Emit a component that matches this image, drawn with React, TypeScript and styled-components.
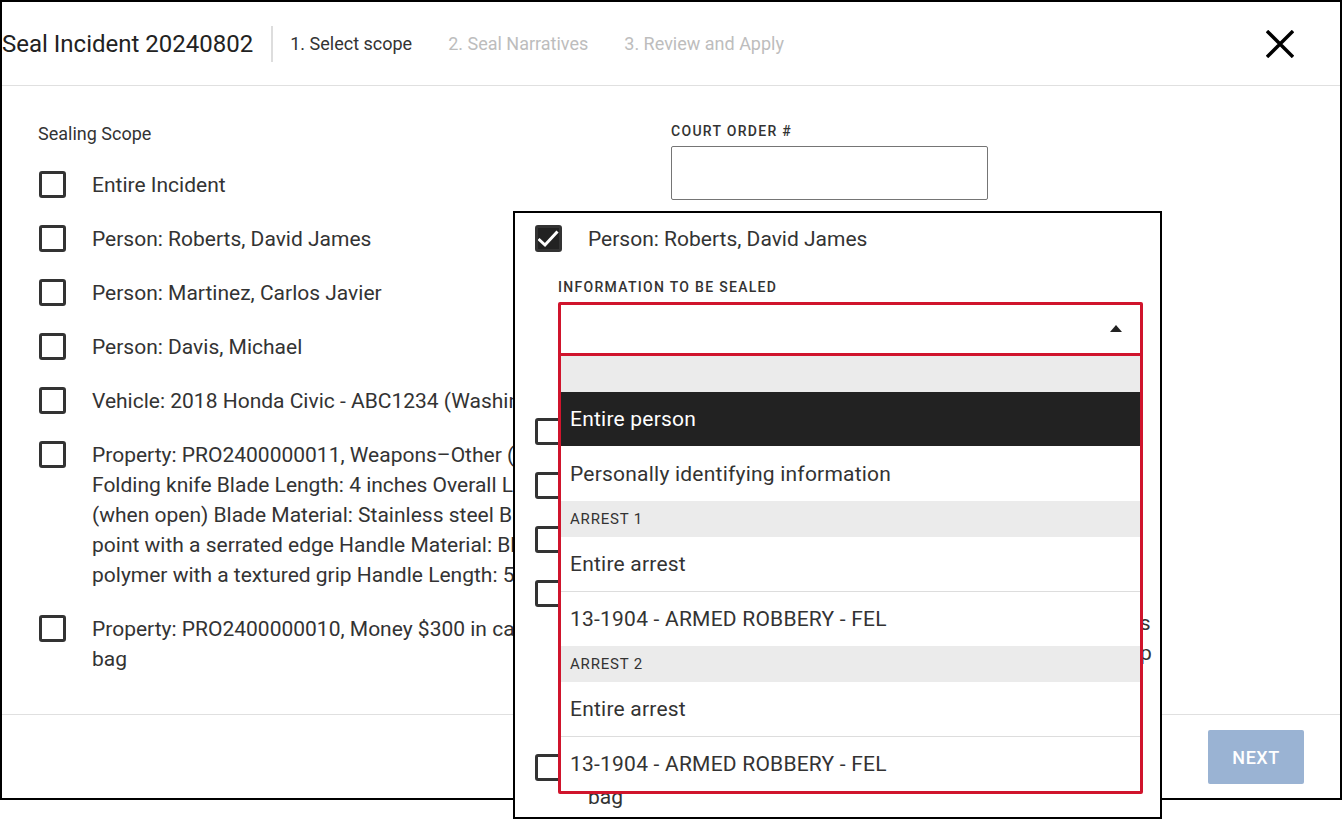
import React from "react";
import styled, { createGlobalStyle } from "styled-components";

const Global = createGlobalStyle`
  html, body { margin: 0; padding: 0; background: #fff; overflow: hidden; }
  * { box-sizing: border-box; }
  body { font-family: Roboto, "Liberation Sans", sans-serif; color: #2b2b2b; }
`;

const Page = styled.div`
  position: relative;
  width: 1342px;
  height: 819px;
  overflow: hidden;
`;
const Dialog = styled.div`
  width: 1342px;
  height: 800px;
  border: 2px solid #000;
  display: flex;
  flex-direction: column;
`;
const Header = styled.header`
  height: 84px;
  flex: none;
  border-bottom: 1px solid #e0e0e0;
  display: flex;
  align-items: center;
`;
const Title = styled.h1`
  margin: 0;
  font-size: 24px;
  font-weight: 400;
  color: #222;
  padding-right: 18px;
  height: 36px;
  line-height: 36px;
  border-right: 2px solid #ddd;
`;
const Steps = styled.nav`
  display: flex;
  gap: 36px;
  margin-left: 17px;
  flex: 1;
`;
const Step = styled.span<{ $active?: boolean }>`
  font-size: 18px;
  color: ${(p) => (p.$active ? "#333" : "#bdbdbd")};
`;
const CloseButton = styled.button`
  border: 0;
  background: none;
  padding: 0;
  margin-right: 46px;
  width: 28px;
  height: 28px;
  display: block;
  svg { display: block; }
`;
const Body = styled.main`
  flex: 1;
  display: grid;
  grid-template-columns: 633px 1fr;
  padding: 36px 0 0 36px;
  min-height: 0;
  border-bottom: 1px solid #e0e0e0;
`;
const ScopeTitle = styled.div`
  font-size: 18px;
  line-height: 24px;
  color: #333;
  margin-bottom: 24px;
`;
const RowList = styled.div`
  display: flex;
  flex-direction: column;
`;
const Row = styled.label`
  display: flex;
  align-items: flex-start;
  gap: 26px;
  padding: 0 0 24px 1px;
  font-size: 21px;
  line-height: 30px;
  color: #333;
`;
const Box = styled.span<{ $checked?: boolean }>`
  flex: none;
  width: 27px;
  height: 27px;
  margin-top: 1px;
  border: 3px solid #333;
  border-radius: 3px;
  background: ${(p) => (p.$checked ? "#222" : "#fff")};
  display: flex;
  align-items: center;
  justify-content: center;
  svg { display: block; }
`;
const RowText = styled.span`
  width: 564px;
`;
const PopupRowList = styled(RowList)`
  margin-top: -1px;
  ${Box} { margin-top: 2px; }
`;
const FieldLabel = styled.div`
  font-size: 14px;
  line-height: 18px;
  font-weight: 500;
  letter-spacing: 1.3px;
  color: #333;
`;
const CourtField = styled.div`
  padding-top: 0;
`;
const CourtInput = styled.div`
  width: 317px;
  height: 54px;
  margin-top: 6px;
  border: 1px solid #757575;
  border-radius: 2px;
`;
const Footer = styled.footer`
  height: 83px;
  flex: none;
  display: flex;
  justify-content: flex-end;
  padding: 15px 36px 0 0;
`;
const NextButton = styled.button`
  width: 96px;
  height: 54px;
  border: 0;
  border-radius: 2px;
  background: #9ab3d3;
  color: #fff;
  font: 500 18px Roboto, sans-serif;
  letter-spacing: 0.5px;
`;
const Popup = styled.section`
  position: absolute;
  left: 513px;
  top: 211px;
  width: 649px;
  height: 608px;
  border: 2px solid #000;
  background: #fff;
  padding: 11px 0 0 19px;
  overflow: hidden;
`;
const InfoField = styled.div`
  position: relative;
  margin: 0 0 61px 24px;
  width: 585px;
`;
const Select = styled.div`
  height: 54px;
  margin-top: 6px;
  border: 3px solid #d0142c;
  border-radius: 2px;
  background: #fff;
  display: flex;
  align-items: center;
  justify-content: flex-end;
  padding-right: 18px;
`;
const Caret = styled.span`
  width: 0;
  height: 0;
  margin-top: -1px;
  border-left: 6.5px solid transparent;
  border-right: 6.5px solid transparent;
  border-bottom: 7px solid #222;
`;
const Listbox = styled.ul`
  position: absolute;
  left: 0;
  top: 75px;
  width: 585px;
  height: 441px;
  margin: 0;
  padding: 0;
  list-style: none;
  background: #fff;
  border: 3px solid #d0142c;
  border-radius: 0 0 2px 2px;
`;
const Group = styled.li`
  height: 36px;
  padding-left: 9px;
  background: #ebebeb;
  font-size: 15px;
  line-height: 36px;
  letter-spacing: 0.8px;
  color: #333;
`;
const Option = styled.li<{ $selected?: boolean; $divider?: boolean; $tall?: boolean }>`
  height: ${(p) => (p.$divider || p.$tall ? 55 : 54)}px;
  padding-left: 9px;
  font-size: 21px;
  line-height: ${(p) => (p.$tall ? 56 : 54)}px;
  letter-spacing: 0.22px;
  background: ${(p) => (p.$selected ? "#222" : "#fff")};
  color: ${(p) => (p.$selected ? "#fff" : "#333")};
  border-bottom: ${(p) => (p.$divider ? "1px solid #ddd" : "0")};
`;

const Check = () => (
  <svg width="21" height="21" viewBox="0 0 21 21" fill="none">
    <path d="M0.5 11 L7 17 L19.5 3.5" stroke="#fff" strokeWidth="3" />
  </svg>
);

const rows = [
  ["Person: Martinez, Carlos Javier"],
  ["Person: Davis, Michael"],
  ["Vehicle: 2018 Honda Civic - ABC1234 (Washington)"],
  [
    "Property: PRO2400000011, Weapons–Other (Pocket knife) Folding knife Blade Length: 4 inches Overall Length: 9 inches (when open) Blade Material: Stainless steel Blade Type: Drop point with a serrated edge Handle Material: Black nylon polymer with a textured grip Handle Length: 5 inches",
  ],
  ["Property: PRO2400000010, Money $300 in cash in a plastic bag"],
];

const ScopeRow = ({ text, checked }: { text: string; checked?: boolean }) => (
  <Row>
    <Box $checked={checked}>{checked && <Check />}</Box>
    <RowText>{text}</RowText>
  </Row>
);

export default function App() {
  return (
    <Page>
      <Global />
      <Dialog>
        <Header>
          <Title>Seal Incident 20240802</Title>
          <Steps>
            <Step $active>1. Select scope</Step>
            <Step>2. Seal Narratives</Step>
            <Step>3. Review and Apply</Step>
          </Steps>
          <CloseButton aria-label="Close">
            <svg width="28" height="28" viewBox="0 0 28 28">
              <path d="M1 1 L27 27 M27 1 L1 27" stroke="#000" strokeWidth="3.4" />
            </svg>
          </CloseButton>
        </Header>
        <Body>
          <div>
            <ScopeTitle>Sealing Scope</ScopeTitle>
            <RowList>
              <ScopeRow text="Entire Incident" />
              <ScopeRow text="Person: Roberts, David James" />
              {rows.map(([t]) => (
                <ScopeRow key={t} text={t} />
              ))}
            </RowList>
          </div>
          <CourtField>
            <FieldLabel>COURT ORDER #</FieldLabel>
            <CourtInput />
          </CourtField>
        </Body>
        <Footer>
          <NextButton>NEXT</NextButton>
        </Footer>
      </Dialog>
      <Popup>
        <ScopeRow text="Person: Roberts, David James" checked />
        <InfoField>
          <FieldLabel>INFORMATION TO BE SEALED</FieldLabel>
          <Select>
            <Caret />
          </Select>
          <Listbox>
            <Group />
            <Option $selected>Entire person</Option>
            <Option $tall>Personally identifying information</Option>
            <Group>ARREST 1</Group>
            <Option $divider>Entire arrest</Option>
            <Option>13-1904 - ARMED ROBBERY - FEL</Option>
            <Group>ARREST 2</Group>
            <Option $divider>Entire arrest</Option>
            <Option>13-1904 - ARMED ROBBERY - FEL</Option>
          </Listbox>
        </InfoField>
        <PopupRowList>
          {rows.map(([t]) => (
            <ScopeRow key={t} text={t} />
          ))}
        </PopupRowList>
      </Popup>
    </Page>
  );
}
